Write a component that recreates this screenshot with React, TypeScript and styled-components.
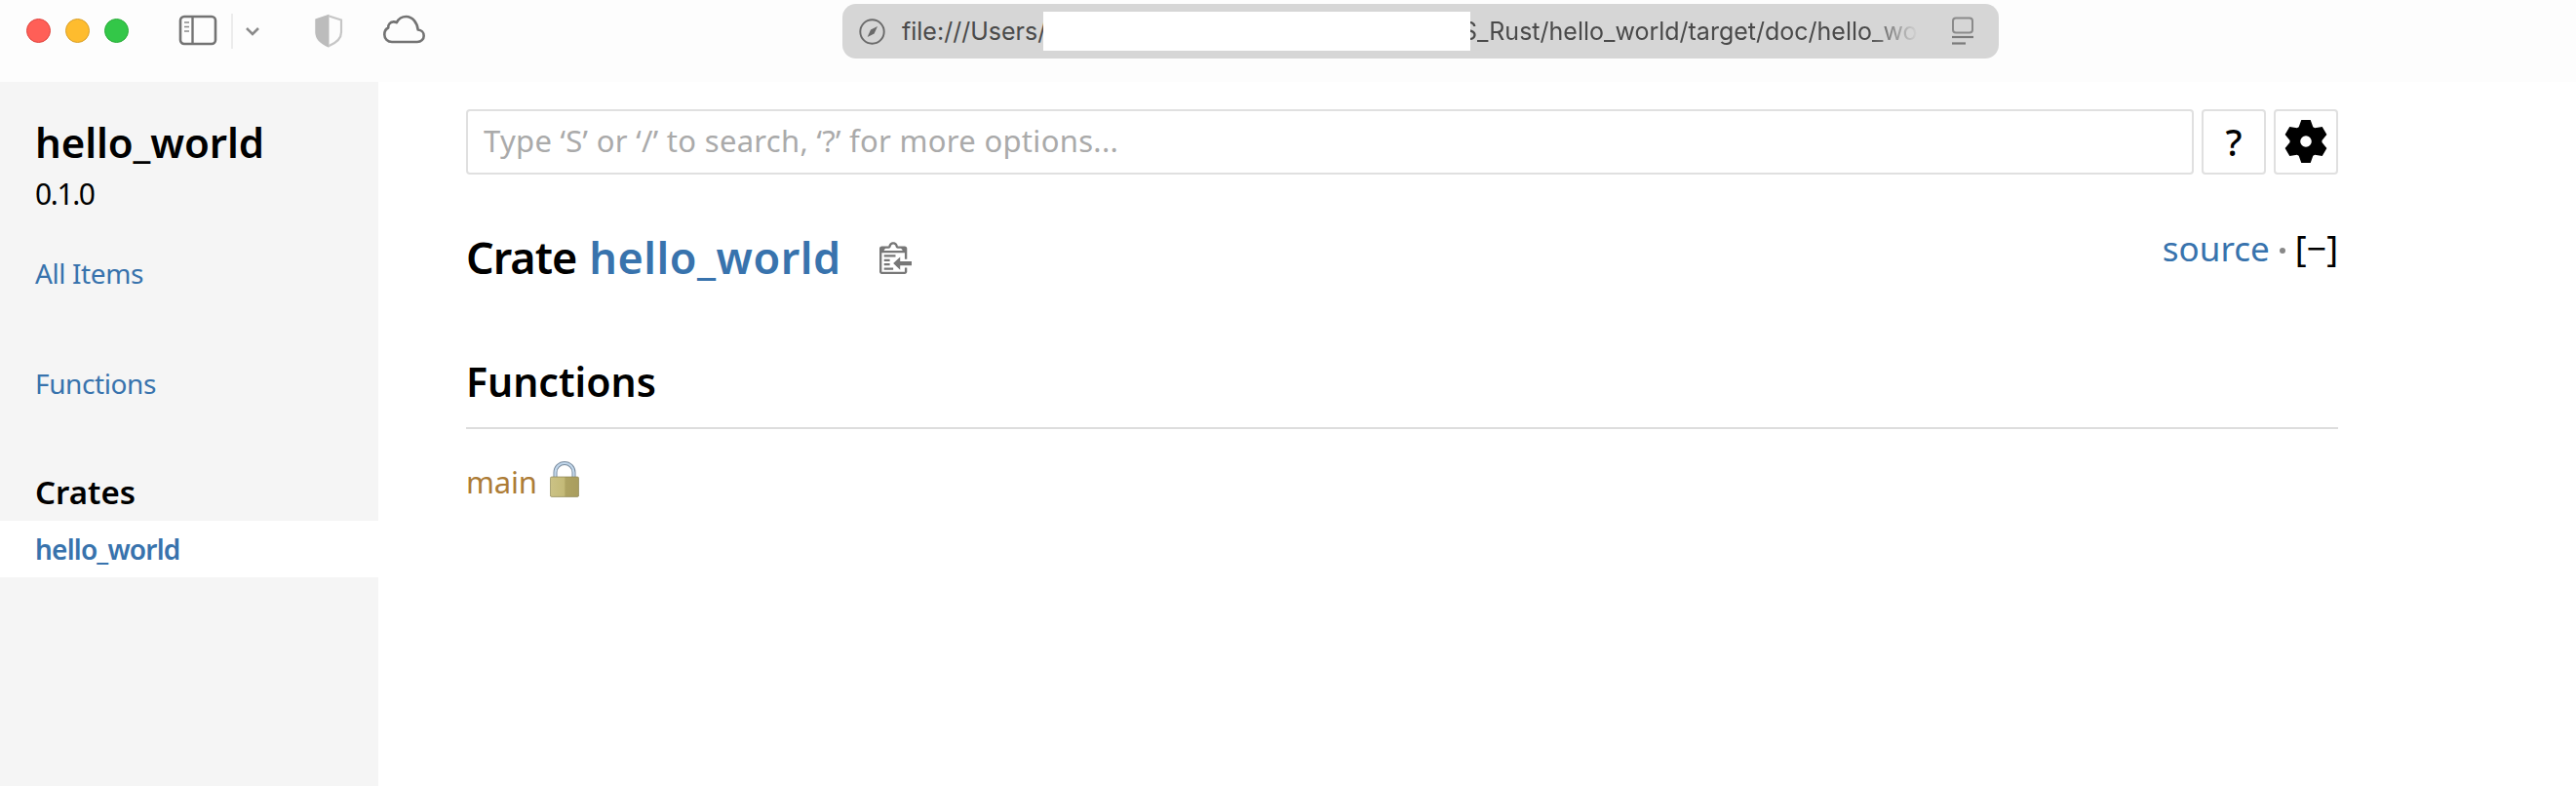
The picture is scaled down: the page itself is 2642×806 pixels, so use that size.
import React from "react";
import styled, { createGlobalStyle } from "styled-components";

const FONT = `"Noto Sans", "Open Sans", sans-serif`;

const Global = createGlobalStyle`
  html, body { margin: 0; padding: 0; background: #fff; overflow: hidden; }
  * { box-sizing: border-box; }
  #root { width: 2642px; height: 806px; }
`;

const Page = styled.div`
  width: 2642px;
  height: 806px;
  display: flex;
  flex-direction: column;
  font-family: ${FONT};
  color: #000;
  overflow: hidden;
`;

const TitleBar = styled.header`
  height: 84px;
  flex: none;
  background: #fdfdfd;
  display: flex;
  align-items: flex-start;
`;

const Lights = styled.div`
  display: flex;
  gap: 15px;
  margin: 19px 0 0 27px;
`;

const Light = styled.span<{ $fill: string; $edge: string }>`
  width: 25px;
  height: 25px;
  border-radius: 50%;
  background: ${(p) => p.$fill};
  border: 1px solid ${(p) => p.$edge};
`;

const ToolIcon = styled.svg<{ $left: number; $top: number }>`
  display: block;
  flex: none;
  margin-left: ${(p) => p.$left}px;
  margin-top: ${(p) => p.$top}px;
`;

const ToolDivider = styled.span`
  width: 2px;
  height: 36px;
  flex: none;
  margin: 14px 0 0 14px;
  background: #ececec;
`;

const UrlBar = styled.div`
  width: 1186px;
  height: 56px;
  flex: none;
  margin: 4px 0 0 428px;
  background: #d6d6d6;
  border-radius: 14px;
  display: flex;
  align-items: center;
  padding-left: 17px;
  font-family: "Inter", "Liberation Sans", sans-serif;
  font-size: 25px;
  color: #4a4a4a;
`;

const UrlHead = styled.span`
  margin-left: 17px;
  width: 145px;
  flex: none;
  line-height: 34px;
  white-space: nowrap;
`;

const Redaction = styled.span`
  width: 438px;
  height: 40px;
  flex: none;
  background: #fff;
`;

const UrlTail = styled.span`
  width: 464px;
  flex: none;
  line-height: 34px;
  white-space: nowrap;
  overflow: hidden;
  text-indent: -9px;
  -webkit-mask-image: linear-gradient(to right, #000 88%, transparent 99%);
  mask-image: linear-gradient(to right, #000 88%, transparent 99%);
`;

const Body = styled.div`
  flex: 1;
  display: flex;
  min-height: 0;
`;

const Sidebar = styled.aside`
  width: 388px;
  flex: none;
  background: #f5f5f5;
`;

const SideText = styled.div<{
  $size: number;
  $weight?: number;
  $color?: string;
  $height: number;
  $top?: number;
  $track?: number;
}>`
  font-size: ${(p) => p.$size}px;
  font-weight: ${(p) => p.$weight ?? 400};
  color: ${(p) => p.$color ?? "#000"};
  line-height: ${(p) => p.$height}px;
  height: ${(p) => p.$height}px;
  margin-top: ${(p) => p.$top ?? 0}px;
  letter-spacing: ${(p) => p.$track ?? 0}px;
  padding-left: 36px;
  white-space: nowrap;
`;

const CurrentRow = styled(SideText)`
  background: #fff;
`;

const Main = styled.main`
  flex: 1;
  background: #fff;
  padding: 28px 0 0 90px;
`;

const Content = styled.div`
  width: 1920px;
`;

const SearchRow = styled.div`
  display: flex;
  gap: 8px;
  height: 67px;
`;

const SearchInput = styled.input`
  flex: 1;
  min-width: 0;
  height: 67px;
  padding: 0 16px 3px;
  border: 2px solid #e0e0e0;
  border-radius: 4px;
  background: #fff;
  font-family: ${FONT};
  font-size: 31px;
  letter-spacing: 0.3px;
  outline: none;
  &::placeholder {
    color: #aaa;
    opacity: 1;
  }
`;

const SquareButton = styled.button`
  width: 66px;
  height: 67px;
  padding: 0 0 2px;
  flex: none;
  border: 2px solid #e0e0e0;
  border-radius: 4px;
  background: #fff;
  color: #000;
  font-family: ${FONT};
  font-size: 38px;
  font-weight: 500;
  display: flex;
  align-items: center;
  justify-content: center;
`;

const TitleRow = styled.div`
  display: flex;
  justify-content: space-between;
  align-items: flex-start;
  margin-top: 49px;
  height: 72px;
`;

const Title = styled.h1`
  margin: 0;
  display: flex;
  align-items: center;
  height: 72px;
  font-size: 45px;
  line-height: 72px;
  font-weight: 600;
  white-space: nowrap;
`;

const TitleWord = styled.span`
  letter-spacing: -1px;
`;

const TitleLink = styled.a`
  color: #3873ad;
  margin-left: 13px;
  letter-spacing: 0.5px;
`;

const CopyIcon = styled.svg`
  display: block;
  width: 33px;
  height: 35px;
  margin-left: 39px;
  margin-bottom: 1px;
`;

const OutOfBand = styled.div`
  font-size: 35px;
  line-height: 50px;
  display: flex;
  align-items: center;
  white-space: nowrap;
  margin-top: 2px;
`;

const SourceLink = styled.a`
  color: #3873ad;
  margin-right: -1px;
`;

const Dot = styled.span`
  width: 6px;
  height: 6px;
  border-radius: 50%;
  background: #888;
  margin: 3px 10px 0 11px;
`;

const Toggle = styled.span`
  font-size: 36px;
`;

const SectionHeading = styled.h2`
  margin: 56px 0 0;
  height: 84px;
  padding-bottom: 14px;
  font-size: 41px;
  line-height: 70px;
  font-weight: 600;
  border-bottom: 2px solid #ddd;
`;

const ItemRow = styled.div`
  display: flex;
  align-items: flex-start;
  margin-top: 32px;
  height: 44px;
`;

const ItemLink = styled.a`
  color: #ad7c37;
  font-size: 31px;
  line-height: 44px;
  letter-spacing: -0.2px;
`;

const Lock = styled.svg`
  display: block;
  margin-left: 13px;
  margin-top: 1px;
`;

function gearPath(cx: number, cy: number): string {
  const teeth = 6;
  const tip = 22.5;
  const root = 16.5;
  const pts: string[] = [];
  for (let i = 0; i < teeth; i++) {
    const a = (i * Math.PI * 2) / teeth - Math.PI / 2;
    const p = (r: number, d: number) => {
      const t = a + d;
      return `${(cx + r * Math.cos(t)).toFixed(2)} ${(cy + r * Math.sin(t)).toFixed(2)}`;
    };
    pts.push(p(root, -0.46), p(tip, -0.21), p(tip, 0.21), p(root, 0.46));
  }
  const hole = 5.8;
  return (
    `M${pts.join("L")}Z` +
    `M${cx - hole} ${cy}a${hole} ${hole} 0 1 0 ${hole * 2} 0a${hole} ${hole} 0 1 0 ${-hole * 2} 0Z`
  );
}

export default function App() {
  return (
    <Page>
      <Global />
      <TitleBar>
        <Lights>
          <Light $fill="#ff5f57" $edge="#e0443e" />
          <Light $fill="#febc2e" $edge="#d9a02a" />
          <Light $fill="#33c748" $edge="#2aac3a" />
        </Lights>
        <ToolIcon $left={51} $top={15} width="40" height="32" viewBox="0 0 40 32" fill="none">
          <rect x="2" y="2" width="36" height="28" rx="4" stroke="#737373" strokeWidth="2.6" />
          <path d="M14.5 2v28" stroke="#737373" strokeWidth="2.4" />
          <path d="M6 8h5M6 12.5h5M6 17h5" stroke="#8a8a8a" strokeWidth="1.6" />
        </ToolIcon>
        <ToolDivider />
        <ToolIcon $left={12} $top={27} width="16" height="11" viewBox="0 0 16 11" fill="none">
          <path d="M2 2l6 6 6-6" stroke="#8a8a8a" strokeWidth="2.6" />
        </ToolIcon>
        <ToolIcon $left={56} $top={14} width="29" height="35" viewBox="0 0 29 35" fill="none">
          <path d="M14.5 1.5 1 6v13c0 7 6 12 13.5 15Z" fill="#bcbcbc" />
          <path d="M14.5 2.5 27 6.5V19c0 6.4-5.3 11-12.5 14" stroke="#c6c6c6" strokeWidth="2.2" />
          <path d="M14.5 1.5 1 6v13c0 7 6 12 13.5 15" stroke="#bcbcbc" strokeWidth="1.5" />
        </ToolIcon>
        <ToolIcon $left={41} $top={15} width="43" height="30" viewBox="0 0 43 30" fill="none">
          <path
            d="M9 28h26c3.9 0 6.7-2.8 6.7-6.3 0-3.4-2.6-6-6-6.2C35 8.6 30.2 2 23.6 2c-4.5 0-8 2.5-9.8 6.2-1.1-.7-2.4-1-3.6-.8-3 .4-5.2 3-5 6.1C2.8 14.6 1.3 17.4 1.3 20.5 1.3 24.8 4.6 28 9 28Z"
            stroke="#737373"
            strokeWidth="2.6"
            strokeLinejoin="round"
          />
        </ToolIcon>
        <UrlBar>
          <svg width="27" height="27" viewBox="0 0 27 27" fill="none" style={{ flex: "none" }}>
            <circle cx="13.5" cy="13.5" r="12.2" stroke="#6a6a6a" strokeWidth="1.9" />
            <path d="M19 8l-3.4 7.6-7 3.4 3.4-7.4Z" fill="#6a6a6a" />
          </svg>
          <UrlHead>file:///Users/</UrlHead>
          <Redaction />
          <UrlTail>S_Rust/hello_world/target/doc/hello_wo</UrlTail>
          <svg width="24" height="30" viewBox="0 0 24 30" fill="none" style={{ flex: "none", marginLeft: 29 }}>
            <rect x="2" y="1.5" width="20" height="15" rx="3" stroke="#8a8a8a" strokeWidth="2" />
            <path d="M1 21h22" stroke="#7a7a7a" strokeWidth="2.2" />
            <path d="M1 27.5h14" stroke="#7a7a7a" strokeWidth="2.2" />
          </svg>
        </UrlBar>
      </TitleBar>
      <Body>
        <Sidebar>
          <SideText $size={42} $weight={600} $height={56} $top={34} $track={-0.1}>hello_world</SideText>
          <SideText $size={30} $height={40} $top={5} $track={-1.4}>0.1.0</SideText>
          <SideText $size={28} $color="#3873ad" $height={40} $top={41} $track={-0.4}>All Items</SideText>
          <SideText $size={28} $color="#3873ad" $height={40} $top={73} $track={-0.4}>Functions</SideText>
          <SideText $size={33} $weight={600} $height={44} $top={70}>Crates</SideText>
          <CurrentRow $size={28} $weight={600} $color="#3873ad" $height={58} $top={7} $track={-0.8}>hello_world</CurrentRow>
        </Sidebar>
        <Main>
          <Content>
            <SearchRow>
              <SearchInput placeholder="Type ‘S’ or ‘/’ to search, ‘?’ for more options..." />
              <SquareButton>?</SquareButton>
              <SquareButton>
                <svg width="46" height="46" viewBox="0 0 46 46" fill="#000">
                  <path fillRule="evenodd" d={gearPath(23, 23)} />
                </svg>
              </SquareButton>
            </SearchRow>
            <TitleRow>
              <Title>
                <TitleWord>Crate</TitleWord>
                <TitleLink>hello_world</TitleLink>
                <CopyIcon viewBox="0 0 14 16" preserveAspectRatio="none" fill="#777">
                  <path d="M2 13h4v1H2v-1zm5-6H2v1h5V7zm2 3V8l-3 3 3 3v-2h5v-2H9zM4.5 9H2v1h2.5V9zM2 12h2.5v-1H2v1zm9 1h1v2c-.02.28-.11.52-.3.7-.19.18-.42.28-.7.3H1c-.55 0-1-.45-1-1V4c0-.55.45-1 1-1h3c0-1.11.89-2 2-2 1.11 0 2 .89 2 2h3c.55 0 1 .45 1 1v5h-1V6H1v9h10v-2zM2 5h8c0-.55-.45-1-1-1H8c-.55 0-1-.45-1-1s-.45-1-1-1-1 .45-1 1-.45 1-1 1H3c-.55 0-1 .45-1 1z" />
                </CopyIcon>
              </Title>
              <OutOfBand>
                <SourceLink>source</SourceLink>
                <Dot />
                <Toggle>[−]</Toggle>
              </OutOfBand>
            </TitleRow>
            <SectionHeading>Functions</SectionHeading>
            <ItemRow>
              <ItemLink>main</ItemLink>
              <Lock width="30" height="37" viewBox="0 0 30 37">
                <defs>
                  <linearGradient id="lockBody" x1="0" y1="0" x2="1" y2="0">
                    <stop offset="0" stopColor="#cbc285" />
                    <stop offset="0.48" stopColor="#c4ba78" />
                    <stop offset="0.54" stopColor="#aea362" />
                    <stop offset="1" stopColor="#a99d5e" />
                  </linearGradient>
                </defs>
                <path d="M5.5 17V11.5a9.5 9.5 0 0 1 19 0V17" fill="none" stroke="#75889b" strokeWidth="4" />
                <path d="M5.5 17V11.5a9.5 9.5 0 0 1 19 0V17" fill="none" stroke="#c3d8ec" strokeWidth="2.2" />
                <rect x="0.4" y="16" width="29.2" height="20.4" rx="1.5" fill="url(#lockBody)" stroke="#8d8554" strokeWidth="0.7" />
              </Lock>
            </ItemRow>
          </Content>
        </Main>
      </Body>
    </Page>
  );
}
